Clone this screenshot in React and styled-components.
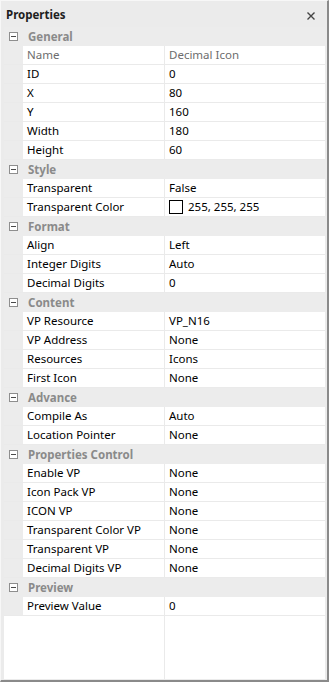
import React from "react";
import styled, { createGlobalStyle } from "styled-components";

const Global = createGlobalStyle`
  html, body { margin: 0; padding: 0; background: #ebebeb; }
  #root { width: 329px; height: 682px; }
  * { box-sizing: border-box; }
`;

const Panel = styled.div`
  width: 329px;
  height: 682px;
  background: #ebebeb;
  border-top: 1px solid #f7f7f7;
  border-left: 1px solid #f7f7f7;
  border-right: 2px solid #8a8a8a;
  border-bottom: 2px solid #8a8a8a;
  display: flex;
  flex-direction: column;
  font-family: "Segoe UI", "Noto Sans", "Open Sans", sans-serif;
  font-size: 11.5px;
  color: #000;
`;

const TitleBar = styled.div`
  height: 26px;
  display: flex;
  align-items: center;
  justify-content: space-between;
  padding: 0 12px 0 5px;
  font-weight: bold;
  color: #1e1e1e;
  flex: none;
`;

const Close = styled.svg`
  width: 8px;
  height: 8px;
  margin-top: 4px;
`;

const Grid = styled.div`
  flex: 1;
  margin: 0 2px 1px 3px;
  background: #fff;
  display: flex;
  flex-direction: column;
`;

const Row = styled.div`
  display: grid;
  grid-template-columns: 19px 141px 1px 1fr;
  height: 19px;
  border-bottom: 1px solid #eaeaea;
  line-height: 18px;
  flex: none;
`;

const Gutter = styled.div`
  background: #ececec;
`;

const NameCell = styled.div`
  padding-left: 4px;
  color: ${(p) => (p.$dim ? "#6d6d6d" : "#000")};
  white-space: nowrap;
  overflow: hidden;
`;

const Divider = styled.div`
  background: #eaeaea;
`;

const ValueCell = styled.div`
  padding-left: 4px;
  color: ${(p) => (p.$dim ? "#6d6d6d" : "#000")};
  display: flex;
  align-items: center;
  gap: 5px;
  white-space: nowrap;
`;

const HeaderRow = styled.div`
  display: flex;
  align-items: center;
  height: 19px;
  background: #ececec;
  flex: none;
  padding-left: 5px;
  font-weight: bold;
  color: #8a8a8a;
  gap: 10px;
`;

const Expander = styled.div`
  width: 9px;
  height: 9px;
  border: 1px solid #8e8e8e;
  background: #fff;
  display: flex;
  align-items: center;
  justify-content: center;
  &::after {
    content: "";
    width: 5px;
    height: 1px;
    background: #4a4a4a;
  }
`;

const Swatch = styled.span`
  width: 14px;
  height: 14px;
  border: 1px solid #000;
  background: #fff;
  flex: none;
`;

const Filler = styled.div`
  flex: 1;
  display: grid;
  grid-template-columns: 160px 1px 1fr;
`;

const data = [
  {
    cat: "General",
    rows: [
      ["Name", "Decimal Icon", true],
      ["ID", "0"],
      ["X", "80"],
      ["Y", "160"],
      ["Width", "180"],
      ["Height", "60"],
    ],
  },
  {
    cat: "Style",
    rows: [
      ["Transparent", "False"],
      ["Transparent Color", "255, 255, 255", false, true],
    ],
  },
  {
    cat: "Format",
    rows: [
      ["Align", "Left"],
      ["Integer Digits", "Auto"],
      ["Decimal Digits", "0"],
    ],
  },
  {
    cat: "Content",
    rows: [
      ["VP Resource", "VP_N16"],
      ["VP Address", "None"],
      ["Resources", "Icons"],
      ["First Icon", "None"],
    ],
  },
  {
    cat: "Advance",
    rows: [
      ["Compile As", "Auto"],
      ["Location Pointer", "None"],
    ],
  },
  {
    cat: "Properties Control",
    rows: [
      ["Enable VP", "None"],
      ["Icon Pack VP", "None"],
      ["ICON VP", "None"],
      ["Transparent Color VP", "None"],
      ["Transparent VP", "None"],
      ["Decimal Digits VP", "None"],
    ],
  },
  {
    cat: "Preview",
    rows: [["Preview Value", "0"]],
  },
];

export default function App() {
  return (
    <>
      <Global />
      <Panel>
        <TitleBar>
          <span>Properties</span>
          <Close viewBox="0 0 8 8">
            <path d="M0.5 0.5 L7.5 7.5 M7.5 0.5 L0.5 7.5" stroke="#444" strokeWidth="1.4" />
          </Close>
        </TitleBar>
        <Grid>
          {data.map((g) => (
            <React.Fragment key={g.cat}>
              <HeaderRow>
                <Expander />
                <span>{g.cat}</span>
              </HeaderRow>
              {g.rows.map(([n, v, dim, swatch]) => (
                <Row key={n}>
                  <Gutter />
                  <NameCell $dim={dim}>{n}</NameCell>
                  <Divider />
                  <ValueCell $dim={dim}>
                    {swatch && <Swatch />}
                    {v}
                  </ValueCell>
                </Row>
              ))}
            </React.Fragment>
          ))}
          <Filler>
            <div />
            <Divider />
            <div />
          </Filler>
        </Grid>
      </Panel>
    </>
  );
}
